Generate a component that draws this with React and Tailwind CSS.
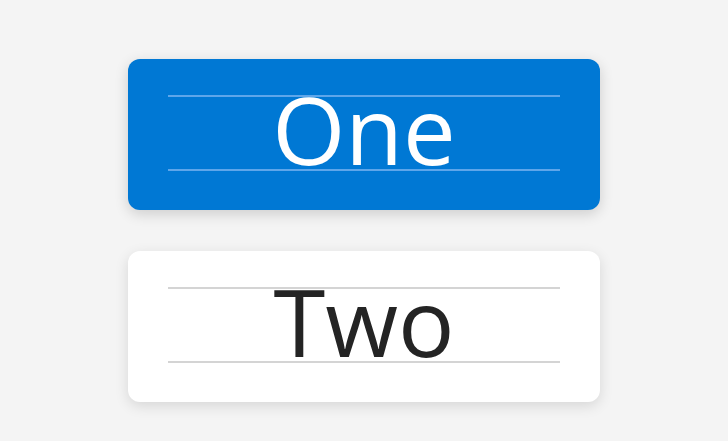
import React from 'react';

const Card = ({ label, dark }) => {
  return (
    <div
      className={`w-[472px] h-[151px] rounded-xl px-10 pt-[36px] ${
        dark
          ? 'bg-[#0078d4] shadow-[0_4px_14px_rgba(0,0,0,0.16)]'
          : 'bg-white shadow-[0_4px_14px_rgba(0,0,0,0.12)]'
      }`}
    >
      {/* cap height and baseline guides */}
      <div
        className={`h-[76px] border-y-2 ${
          dark ? 'border-[#5ea6ea]' : 'border-[#d4d4d4]'
        }`}
      >
        <div
          className={`text-center text-[94px] leading-none mt-[-15px] ${
            dark ? 'text-white' : 'text-[#242424]'
          }`}
          style={{ fontFamily: '"Open Sans", "Noto Sans", sans-serif' }}
        >
          {label}
        </div>
      </div>
    </div>
  );
};

const App = () => {
  return (
    <div className="w-[728px] h-[441px] bg-[#f4f4f4] flex flex-col items-center pt-[59px] gap-[41px] overflow-hidden">
      <Card label="One" dark />
      <Card label="Two" />
    </div>
  );
};

export default App;
